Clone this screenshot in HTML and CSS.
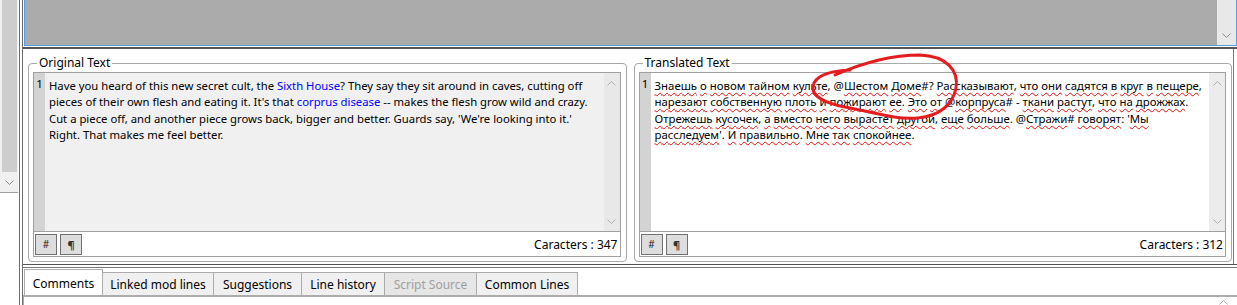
FILE: index.html
```html
<!DOCTYPE html>
<html lang="en">
<head>
    <meta charset="UTF-8">
    <title>Translation editor</title>
    <link rel="stylesheet" href="styles.css">
</head>
<body>
<div class="app">
    <!-- left list scrollbar -->
    <div class="side">
        <div class="side-scroll">
            <div class="side-thumb"></div>
            <div class="side-arrow">
                <svg width="9" height="5" viewBox="0 0 9 5"><polyline points="0.5,0.5 4.5,4.5 8.5,0.5" fill="none" stroke="#8a8a8a" stroke-width="1"/></svg>
            </div>
        </div>
    </div>
    <div class="vsplit"></div>

    <div class="main">
        <!-- lines list (empty) -->
        <div class="list">
            <div class="list-body"></div>
            <div class="list-scroll">
                <svg width="9" height="5" viewBox="0 0 9 5"><polyline points="0.5,0.5 4.5,4.5 8.5,0.5" fill="none" stroke="#8a8a8a" stroke-width="1"/></svg>
            </div>
        </div>
        <div class="hsplit-top"></div>

        <div class="editors">
            <!-- Texte original -->
            <fieldset class="group">
                <legend>Original Text</legend>
                <div class="editor">
                    <div class="edit-area original">
                        <div class="gutter">1</div>
                        <div class="text">
                            <div class="ln">Have you heard of this new secret cult, the <span class="link">Sixth House</span>? They say they sit around in caves, cutting off</div>
                            <div class="ln">pieces of their own flesh and eating it. It's that <span class="link">corprus disease</span> -- makes the flesh grow wild and crazy.</div>
                            <div class="ln">Cut a piece off, and another piece grows back, bigger and better. Guards say, 'We're looking into it.'</div>
                            <div class="ln">Right. That makes me feel better.</div>
                        </div>
                        <div class="vscroll">
                            <svg width="9" height="5" viewBox="0 0 9 5"><polyline points="0.5,4.5 4.5,0.5 8.5,4.5" fill="none" stroke="#b0b0b0" stroke-width="1"/></svg>
                            <svg width="9" height="5" viewBox="0 0 9 5"><polyline points="0.5,0.5 4.5,4.5 8.5,0.5" fill="none" stroke="#b0b0b0" stroke-width="1"/></svg>
                        </div>
                    </div>
                    <div class="tools">
                        <button class="tbtn">#</button>
                        <button class="tbtn pil">¶</button>
                        <span class="count">Caracters : 347</span>
                    </div>
                </div>
            </fieldset>

            <!-- Texte traduit -->
            <fieldset class="group">
                <legend>Translated Text</legend>
                <div class="editor">
                    <div class="edit-area translated">
                        <div class="gutter">1</div>
                        <div class="text">
                            <div class="ln"><span class="sp">Знаешь</span> <span class="sp">о</span> <span class="sp">новом</span> <span class="sp">тайном</span> <span class="sp">культе</span>, @<span class="sp">Шестом</span> <span class="sp">Доме</span>#? <span class="sp">Рассказывают</span>, <span class="sp">что</span> <span class="sp">они</span> <span class="sp">садятся</span> <span class="sp">в</span> <span class="sp">круг</span> <span class="sp">в</span> <span class="sp">пещере</span>,</div>
                            <div class="ln"><span class="sp">нарезают</span> <span class="sp">собственную</span> <span class="sp">плоть</span> <span class="sp">и</span> <span class="sp">пожирают</span> <span class="sp">ее</span>. <span class="sp">Это</span> <span class="sp">от</span> @<span class="sp">корпруса</span># - <span class="sp">ткани</span> <span class="sp">растут</span>, <span class="sp">что</span> <span class="sp">на</span> <span class="sp">дрожжах</span>.</div>
                            <div class="ln"><span class="sp">Отрежешь</span> <span class="sp">кусочек</span>, <span class="sp">а</span> <span class="sp">вместо</span> <span class="sp">него</span> <span class="sp">вырастет</span> <span class="sp">другой</span>, <span class="sp">еще</span> <span class="sp">больше</span>. @<span class="sp">Стражи</span># <span class="sp">говорят</span>: '<span class="sp">Мы</span></div>
                            <div class="ln"><span class="sp">расследуем</span>'. <span class="sp">И</span> <span class="sp">правильно</span>. <span class="sp">Мне</span> <span class="sp">так</span> <span class="sp">спокойнее</span>.</div>
                        </div>
                        <div class="vscroll">
                            <svg width="9" height="5" viewBox="0 0 9 5"><polyline points="0.5,4.5 4.5,0.5 8.5,4.5" fill="none" stroke="#b0b0b0" stroke-width="1"/></svg>
                            <svg width="9" height="5" viewBox="0 0 9 5"><polyline points="0.5,0.5 4.5,4.5 8.5,0.5" fill="none" stroke="#b0b0b0" stroke-width="1"/></svg>
                        </div>
                    </div>
                    <div class="tools">
                        <button class="tbtn">#</button>
                        <button class="tbtn pil">¶</button>
                        <span class="count">Caracters : 312</span>
                    </div>
                </div>
            </fieldset>
        </div>

        <div class="hsplit"></div>

        <div class="tabs">
            <div class="tab active">Comments</div>
            <div class="tab t-linked">Linked mod lines</div>
            <div class="tab t-sugg">Suggestions</div>
            <div class="tab t-hist">Line history</div>
            <div class="tab t-script disabled">Script Source</div>
            <div class="tab t-common">Common Lines</div>
        </div>
        <div class="tab-body">
            <div class="tab-scroll">
                <svg width="9" height="5" viewBox="0 0 9 5"><polyline points="0.5,4.5 4.5,0.5 8.5,4.5" fill="none" stroke="#b0b0b0" stroke-width="1"/></svg>
            </div>
        </div>
    </div>

    <!-- annotation rouge dessinée à la main -->
    <svg class="scribble" width="170" height="90" viewBox="0 0 170 90">
        <path d="M29,25 C54,14 84,5 114,5 C140,6 153,20 150,38 C147,54 134,66 112,68 C89,70 62,61 39,57 C19,53 5,46 7,36 C9,26 24,21 44,20" fill="none" stroke="#e41b1f" stroke-width="3" stroke-linecap="round"/>
    </svg>
</div>
</body>
</html>
```

FILE: styles.css
```css
body {
    margin: 0;
    padding: 0;
    background: #ffffff;
    font-family: 'Noto Sans', sans-serif;
    font-size: 11.5px;
    color: #000;
}

.app {
    position: relative;
    display: flex;
    width: 1237px;
    height: 305px;
    overflow: hidden;
}

/* colonne de gauche */
.side {
    width: 18px;
    flex: none;
    background: #fff;
}

.side-scroll {
    height: 192px;
    background: #f0f0f0;
    border-bottom: 1px solid #a0a0a0;
    display: flex;
    flex-direction: column;
}

.side-thumb {
    flex: 1;
    margin: 0 1px 0 2px;
    background: #cdcdcd;
}

.side-arrow {
    height: 20px;
    display: flex;
    align-items: center;
    justify-content: center;
}

.vsplit {
    width: 4px;
    flex: none;
    border-left: 1px solid #6e6e6e;
    border-right: 1px solid #6e6e6e;
    box-sizing: border-box;
    margin-left: 1px;
    background: #fff;
}

.main {
    flex: 1;
    display: flex;
    flex-direction: column;
    min-width: 0;
}

/* liste du haut */
.list {
    height: 46px;
    flex: none;
    display: flex;
    margin-left: 1px;
    border: 1px solid #569de5;
    border-top: none;
    box-sizing: border-box;
}

.list-body {
    flex: 1;
    background: #ababab;
}

.list-scroll {
    width: 19px;
    background: #e8e8e8;
    display: flex;
    align-items: flex-end;
    justify-content: center;
    padding-bottom: 7px;
    box-sizing: border-box;
}

.hsplit-top {
    height: 2px;
    margin-top: 1px;
    background: #555;
    flex: none;
}

/* zone des deux éditeurs */
.editors {
    flex: 1;
    display: flex;
    gap: 7px;
    padding: 0 1px 0 5px;
    margin-right: 3px;
    border-right: 1px solid #7a7a7a;
    min-height: 0;
}

.group {
    flex: 1;
    min-width: 0;
    margin: 6px 0 2px 0;
    padding: 1px 5px 4px 4px;
    border: 1px solid #a8a8a8;
    border-radius: 4px;
    box-shadow: inset 0 0 0 1px #fff;
}

.group legend {
    padding: 0 2px;
    margin-left: 4px;
    line-height: 16px;
    font-size: 12px;
}

.editor {
    border: 1px solid #a0a0a0;
}

.edit-area {
    display: flex;
    height: 158px;
    border-bottom: 1px solid #a0a0a0;
}

.edit-area.original .text {
    background: #f0f0f0;
    font-size: 11.3px;
}

.edit-area.translated .text {
    background: #fff;
    font-size: 11.4px;
}

.gutter {
    width: 11px;
    flex: none;
    background: #d3d3d3;
    text-align: center;
    line-height: 16px;
    padding-top: 3px;
    font-size: 11.5px;
}

.text {
    flex: 1;
    padding: 5px 0 0 4px;
    line-height: 16.3px;
    white-space: nowrap;
    overflow: hidden;
}

.link {
    color: #0000ff;
}

.sp {
    text-decoration: underline wavy #e01010;
    text-decoration-thickness: 1px;
    text-underline-offset: 2px;
    text-decoration-skip-ink: none;
}

.vscroll {
    width: 16px;
    flex: none;
    background: #e8e8e8;
    display: flex;
    flex-direction: column;
    justify-content: space-between;
    align-items: center;
    padding: 8px 0 7px;
    box-sizing: border-box;
}

.edit-area.translated .vscroll {
    background: #ececec;
}

.tools {
    height: 24px;
    display: flex;
    align-items: center;
    gap: 3px;
    padding: 0 2px 0 1px;
    background: #fff;
}

.tbtn {
    width: 22px;
    height: 21px;
    padding: 0;
    border: 1px solid #707070;
    background: #dddddd;
    font-family: 'Noto Sans', sans-serif;
    font-size: 10px;
    color: #222;
}

.tbtn.pil {
    font-size: 11px;
    font-weight: bold;
    color: #333;
}

.count {
    margin-left: auto;
    font-size: 12px;
}

.hsplit {
    height: 2px;
    border-top: 1px solid #555;
    border-bottom: 1px solid #777;
    flex: none;
}

/* onglets */
.tabs {
    display: flex;
    align-items: flex-end;
    height: 27px;
    padding-left: 1px;
    border-bottom: 2px solid #acacac;
    flex: none;
    font-size: 12px;
}

.tab {
    height: 23px;
    line-height: 23px;
    text-align: center;
    background: #f0f0f0;
    border: 1px solid #acacac;
    border-bottom: none;
    margin-left: -1px;
    box-sizing: border-box;
}

.tab.active {
    width: 79px;
    height: 26px;
    line-height: 28px;
    background: #fff;
    margin-left: 0;
}

.t-linked { width: 112px; }
.t-sugg { width: 89px; }
.t-hist { width: 84px; }
.t-script { width: 93px; }
.t-common { width: 102px; }

.tab.disabled {
    color: #a0a0a0;
    background: #e6e6e6;
}

.tab-body {
    height: 8px;
    display: flex;
    justify-content: flex-end;
    border-left: 1px solid #acacac;
}

.tab-scroll {
    width: 17px;
    padding-top: 3px;
    display: flex;
    justify-content: center;
    margin-right: 5px;
}

/* annotation */
.scribble {
    position: absolute;
    left: 806px;
    top: 50px;
}
```
